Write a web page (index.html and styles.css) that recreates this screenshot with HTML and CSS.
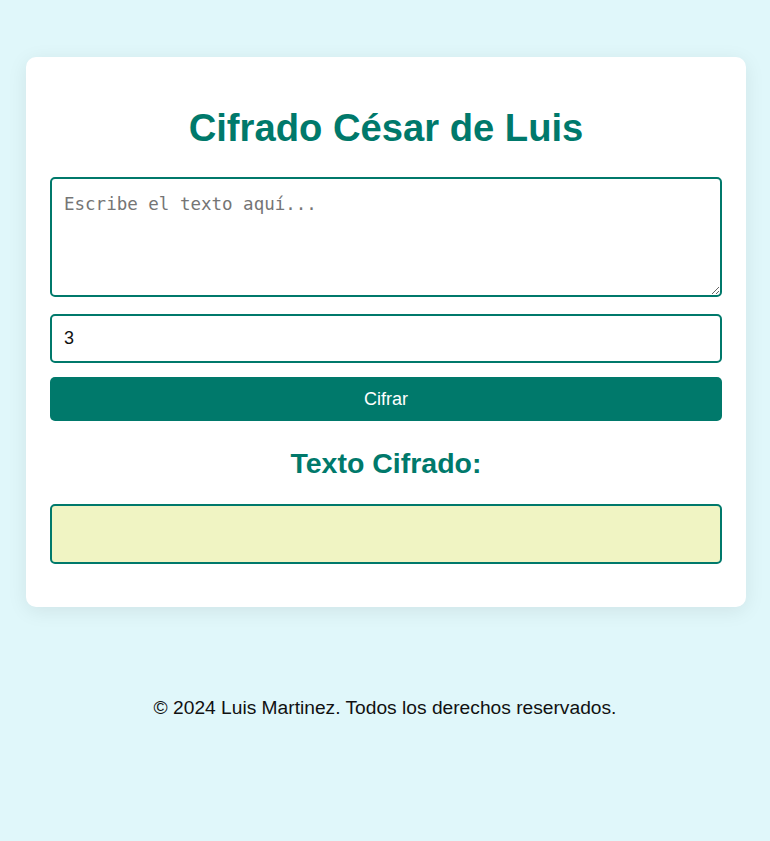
FILE: index.html
```html
<!DOCTYPE html>
<html lang="es">
<head>
<meta charset="utf-8">
<title>Cifrado César de Luis</title>
<link rel="stylesheet" href="styles.css">
</head>
<body>
<main class="card">
  <h1 class="title">Cifrado César de Luis</h1>
  <textarea class="text-input" placeholder="Escribe el texto aquí..."></textarea>
  <input class="shift-input" type="number" value="3">
  <button class="btn">Cifrar</button>
  <h2 class="subtitle">Texto Cifrado:</h2>
  <div class="output"></div>
</main>
<footer class="footer">© 2024 Luis Martinez. Todos los derechos reservados.</footer>
</body>
</html>
```

FILE: styles.css
```css
html, body {
  margin: 0;
  padding: 0;
}
body {
  background: #e0f7fa;
  font-family: "Liberation Sans", Arial, sans-serif;
  color: #222;
  padding-top: 57px;
}
.card {
  box-sizing: border-box;
  width: 720px;
  margin: 0 0 0 26px;
  background: #ffffff;
  border-radius: 10px;
  box-shadow: 0 4px 20px rgba(0, 0, 0, 0.08);
  padding: 24px 24px 43px;
  display: flex;
  flex-direction: column;
}
.title {
  margin: 25px 0 27px;
  text-align: center;
  color: #00796b;
  font-size: 38.2px;
  font-weight: bold;
  line-height: 44px;
}
.text-input {
  display: block;
  box-sizing: border-box;
  width: 100%;
  height: 120px;
  margin: 0;
  padding: 15px 12px 12px;
  border: 2px solid #00796b;
  border-radius: 5px;
  font-family: "DejaVu Sans Mono", monospace;
  font-size: 17.5px;
  resize: vertical;
  outline: none;
}
.text-input::placeholder {
  color: #757575;
}
.shift-input {
  display: block;
  box-sizing: border-box;
  width: 100%;
  height: 49px;
  margin: 17px 0 0;
  padding: 0 12px;
  border: 2px solid #00796b;
  border-radius: 5px;
  font-family: "Liberation Sans", Arial, sans-serif;
  font-size: 18px;
  color: #111;
  outline: none;
}
.btn {
  display: block;
  width: 100%;
  height: 44px;
  margin: 14px 0 0;
  border: none;
  border-radius: 5px;
  background: #00796b;
  color: #ffffff;
  font-family: "Liberation Sans", Arial, sans-serif;
  font-size: 18px;
  cursor: pointer;
}
.subtitle {
  margin: 26px 0 0;
  text-align: center;
  color: #00796b;
  font-size: 28.5px;
  font-weight: bold;
  line-height: 32px;
}
.output {
  box-sizing: border-box;
  height: 60px;
  margin-top: 25px;
  border: 2px solid #00796b;
  border-radius: 5px;
  background: #f0f4c3;
}
.footer {
  margin-top: 90px;
  text-align: center;
  font-size: 19.2px;
  line-height: 22px;
  color: #111;
}
```
